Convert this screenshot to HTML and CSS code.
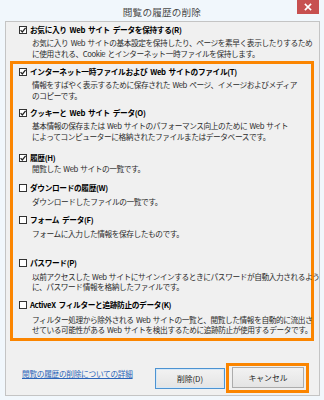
FILE: index.html
```html
<!DOCTYPE html>
<html lang="ja">
<head>
<meta charset="utf-8">
<title>閲覧の履歴の削除</title>
<link rel="stylesheet" href="styles.css">
</head>
<body>
<div class="window">
  <div class="titlebar">
    <span></span>
    <span class="title">閲覧の履歴の削除</span>
    <span class="close"><svg width="22" height="14" viewBox="0 0 22 14"><path d="M8.5 4.5 L13.5 9.5 M13.5 4.5 L8.5 9.5" stroke="#fff" stroke-width="1.7" stroke-linecap="square"/></svg></span>
  </div>
  <div class="panel">
    <div class="item first">
      <div class="head"><span class="cb on"><svg width="8" height="8" viewBox="0 0 8 8"><path d="M1.6 4.1 L3.3 5.9 L6.6 1.9" fill="none" stroke="#222" stroke-width="1.3"/></svg></span><span>お気に入り Web サイト データを保持する(R)</span></div>
      <div class="desc">お気に入り Web サイトの基本設定を保持したり、ページを素早く表示したりするため<br>に使用される、Cookie とインターネット一時ファイルを保持します。</div>
    </div>
    <div class="highlight">
      <div class="item">
        <div class="head"><span class="cb on"><svg width="8" height="8" viewBox="0 0 8 8"><path d="M1.6 4.1 L3.3 5.9 L6.6 1.9" fill="none" stroke="#222" stroke-width="1.3"/></svg></span><span>インターネット一時ファイルおよび Web サイトのファイル(T)</span></div>
        <div class="desc">情報をすばやく表示するために保存された Web ページ、イメージおよびメディア<br>のコピーです。</div>
      </div>
      <div class="item i3">
        <div class="head"><span class="cb on"><svg width="8" height="8" viewBox="0 0 8 8"><path d="M1.6 4.1 L3.3 5.9 L6.6 1.9" fill="none" stroke="#222" stroke-width="1.3"/></svg></span><span>クッキーと Web サイト データ(O)</span></div>
        <div class="desc">基本情報の保存または Web サイトのパフォーマンス向上のために Web サイト<br>によってコンピューターに格納されたファイルまたはデータベースです。</div>
      </div>
      <div class="item i4">
        <div class="head"><span class="cb on"><svg width="8" height="8" viewBox="0 0 8 8"><path d="M1.6 4.1 L3.3 5.9 L6.6 1.9" fill="none" stroke="#222" stroke-width="1.3"/></svg></span><span>履歴(H)</span></div>
        <div class="desc">閲覧した Web サイトの一覧です。</div>
      </div>
      <div class="item i5">
        <div class="head"><span class="cb"></span><span>ダウンロードの履歴(W)</span></div>
        <div class="desc">ダウンロードしたファイルの一覧です。</div>
      </div>
      <div class="item i6">
        <div class="head"><span class="cb"></span><span>フォーム データ(F)</span></div>
        <div class="desc">フォームに入力した情報を保存したものです。</div>
      </div>
      <div class="item i7">
        <div class="head"><span class="cb"></span><span>パスワード(P)</span></div>
        <div class="desc">以前アクセスした Web サイトにサインインするときにパスワードが自動入力されるよう<br>に、パスワード情報を格納したファイルです。</div>
      </div>
      <div class="item i8">
        <div class="head"><span class="cb"></span><span>ActiveX フィルターと追跡防止のデータ(K)</span></div>
        <div class="desc">フィルター処理から除外される Web サイトの一覧と、閲覧した情報を自動的に流出さ<br>せている可能性がある Web サイトを検出するために追跡防止が使用するデータです。</div>
      </div>
    </div>
    <div class="footer">
      <a class="link" href="#">閲覧の履歴の削除についての詳細</a>
      <button class="btn default">削除(D)</button>
      <div class="btn-mark"><button class="btn">キャンセル</button></div>
    </div>
  </div>
</div>
</body>
</html>
```
FILE: styles.css
```css
* { box-sizing: border-box; }
html, body { margin: 0; padding: 0; }
body {
  width: 324px;
  height: 400px;
  overflow: hidden;
  font-family: "Noto Sans CJK JP", "Noto Sans", sans-serif;
  color: #1a1a1a;
}
.window {
  width: 324px;
  height: 400px;
  background: #f1f7fc;
  display: flex;
  flex-direction: column;
}
.titlebar {
  height: 21px;
  display: grid;
  grid-template-columns: 1fr auto 1fr;
  align-items: start;
}
.title {
  font-size: 9.6px;
  line-height: 24px;
  color: #4a4a4a;
  letter-spacing: 0.2px;
}
.close {
  justify-self: end;
  margin-right: 5px;
  width: 22px;
  height: 14px;
  background: #c75050;
  display: flex;
}
.panel {
  margin-left: 5px;
  width: 315px;
  height: 375px;
  border: 1px solid #c4c4c4;
  background: #f0f0f0;
  padding-top: 3px;
  display: flex;
  flex-direction: column;
}
.item.first { margin-left: 13px; }
.head {
  display: flex;
  align-items: center;
  height: 10px;
  font-size: 7.7px;
  font-weight: 700;
  line-height: 10px;
  letter-spacing: -0.35px;
  white-space: nowrap;
  color: #000;
}
.head span + span { word-spacing: 1.5px; }
.cb {
  width: 8px;
  height: 8px;
  border: 1px solid #333;
  background: #fff;
  margin-right: 3px;
  display: flex;
  align-items: center;
  justify-content: center;
  flex: none;
}
.cb svg { display: block; margin: -1px; }
.desc {
  margin-left: 13px;
  margin-top: 3px;
  font-size: 7.7px;
  line-height: 10.5px;
  letter-spacing: -0.42px;
  word-spacing: 1px;
  white-space: nowrap;
  color: #2a2a2a;
}
.highlight {
  margin: 2px 5px 0 4px;
  border: 3px solid #fb8500;
  padding: 3px 0 2.5px 6px;
}
.i3 { margin-top: 7px; }
.i4 { margin-top: 11px; }
.i4 .desc { margin-top: 1px; }
.i5 { margin-top: 8px; }
.i5 .desc, .i6 .desc, .i7 .desc { margin-top: 4px; }
.i6 { margin-top: 8px; }
.i7 { margin-top: 18px; }
.i8 { margin-top: 7px; }
.i8 .desc { margin-top: 5px; }
.footer {
  margin-top: auto;
  padding: 0 10px 2px 16px;
  display: flex;
  align-items: center;
}
.link {
  font-size: 7.7px;
  line-height: 10px;
  letter-spacing: -0.3px;
  color: #2a64b8;
  text-decoration: underline;
  margin-bottom: 9px;
  margin-right: auto;
}
.btn {
  height: 21px;
  border: 1px solid #acacac;
  background: linear-gradient(#f2f2f2, #e4e4e4);
  font-family: inherit;
  font-size: 7.8px;
  color: #222;
  padding: 0;
  margin: 0;
}
.btn.default {
  width: 70px;
  border-color: #4c93d2;
  box-shadow: inset 0 0 0 1px #d6e8f7;
  margin-right: 1px;
}
.btn-mark {
  border: 3px solid #fb8500;
  padding: 1px 2px 2px 3px;
  display: flex;
}
.btn-mark .btn { width: 72px; }
```
